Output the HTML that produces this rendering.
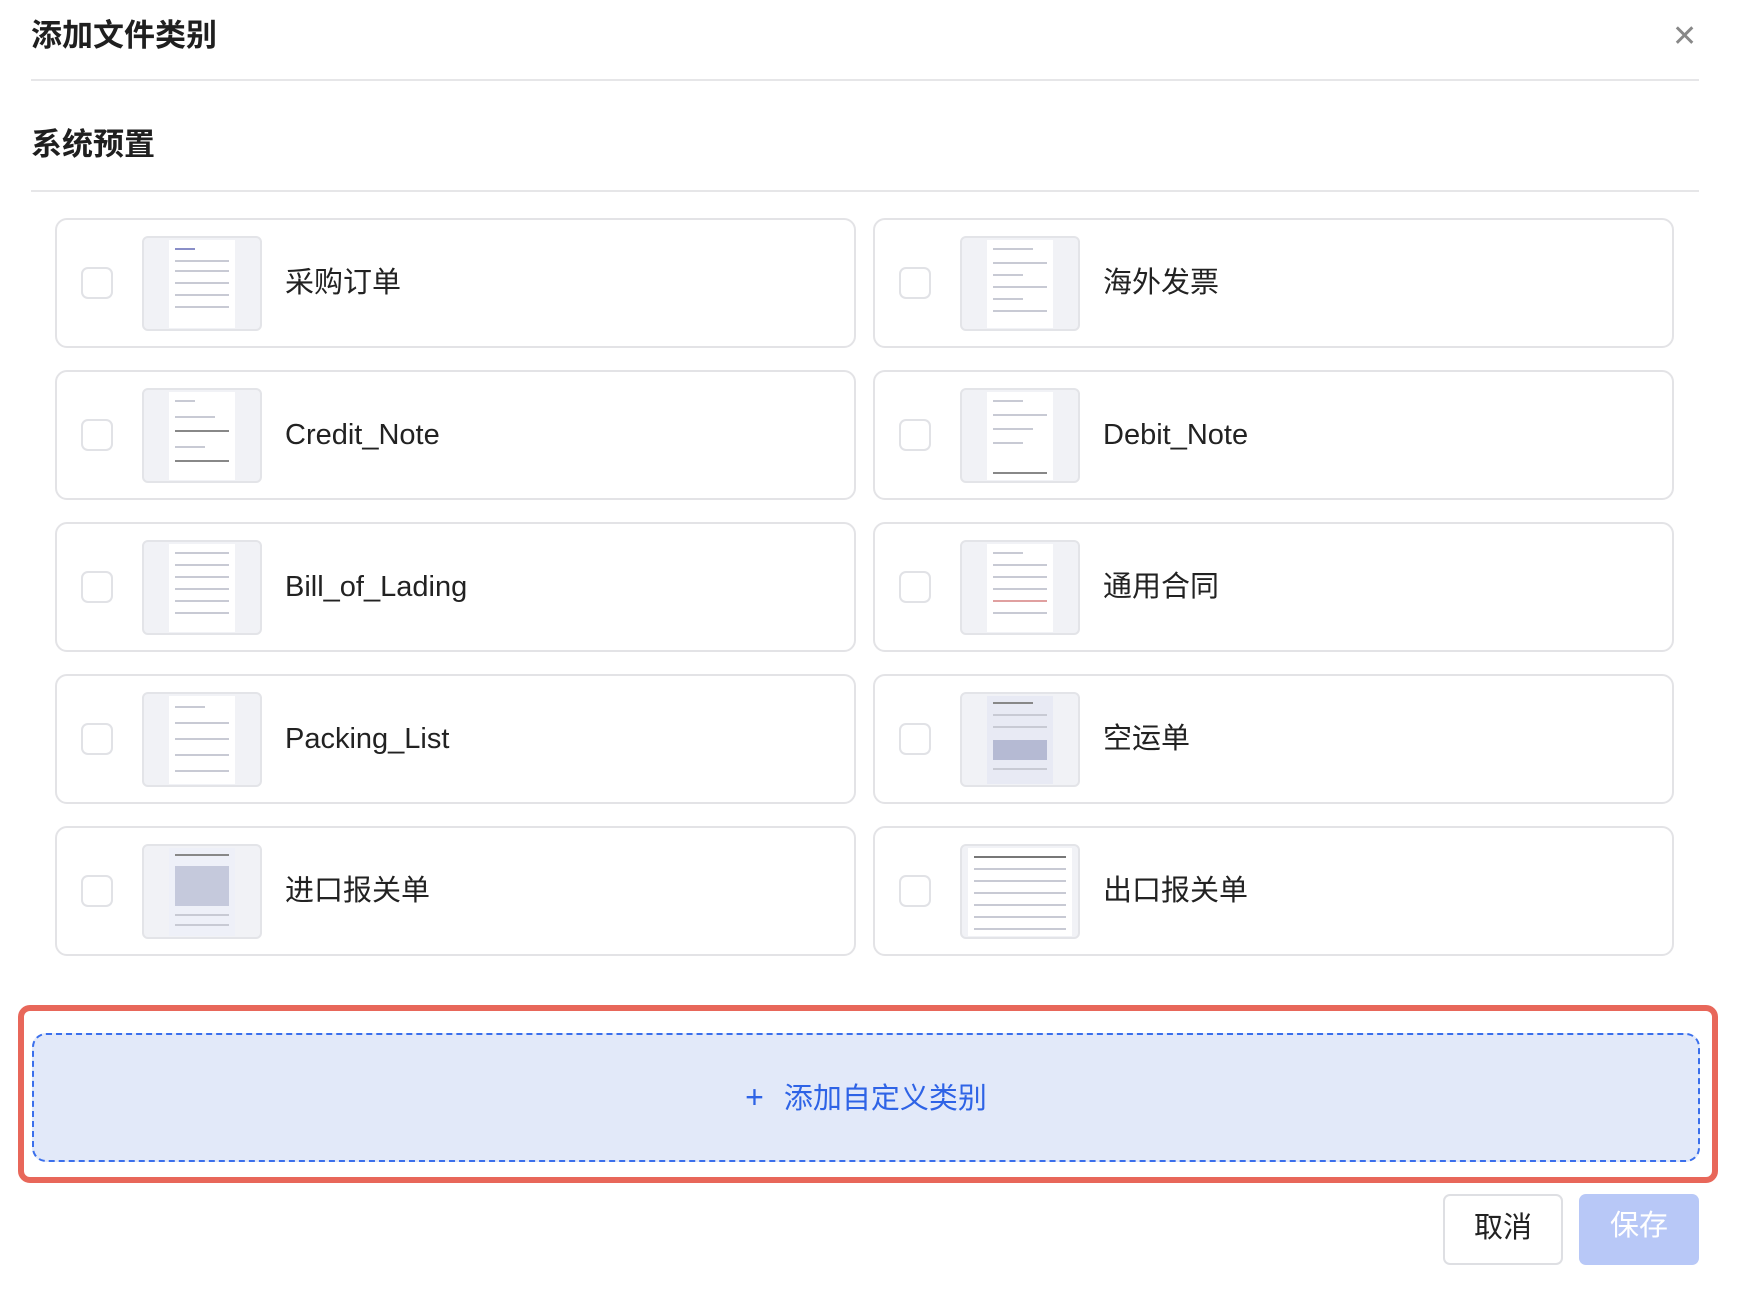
<!DOCTYPE html>
<html><head><meta charset="utf-8"><style>
*{box-sizing:border-box;margin:0;padding:0}
body{width:1740px;height:1292px;background:#fff;position:relative;font-family:"Liberation Sans","Noto Sans CJK SC",sans-serif;color:#1f1f1f;overflow:hidden}
.abs{position:absolute}
.title{left:31px;top:16px;font-size:31px;font-weight:600;line-height:40px}
.close{left:1672px;top:22px;font-size:30px;color:#888;line-height:30px}
.hr{height:2px;background:#e6e6e8;left:31px;width:1668px}
.sec{left:31px;top:125px;font-size:31px;font-weight:700;line-height:40px}
.card{width:801px;height:130px;border:2px solid #e3e3e6;border-radius:12px;background:#fff}
.cb{position:absolute;left:24px;top:47px;width:32px;height:32px;border:2px solid #e1e2e6;border-radius:7px}
.th{position:absolute;left:85px;top:16px;width:120px;height:95px;border:2px solid #e3e4e8;border-radius:6px;background:#f1f2f6;overflow:hidden}
.doc{position:absolute;left:25px;top:2px;width:66px;height:88px;background:#fff}
.doc i{position:absolute;left:6px;height:2px;background:#c8cad4}
.lb{position:absolute;left:228px;top:0;line-height:126px;font-size:29px;color:#222}
.red{left:18px;top:1005px;width:1700px;height:178px;border:6px solid #e8675a;border-radius:12px}
.dash{left:32px;top:1033px;width:1668px;height:129px;border:2px dashed #3a6fec;border-radius:14px;background:#e2e9f9;text-align:center;line-height:125px;font-size:29px;color:#2e63e6}
.btn{top:1194px;width:120px;height:71px;border-radius:7px;text-align:center;line-height:65px;font-size:29px}
</style></head><body>
<div class="abs title">添加文件类别</div>
<div class="abs close">✕</div>
<div class="abs hr" style="top:79px"></div>
<div class="abs sec">系统预置</div>
<div class="abs hr" style="top:190px"></div>

<div class="abs card" style="left:55px;top:218px"><div class="cb"></div><div class="th"><div class="doc"><i style="top:8px;width:20px;background:#8a8fc8"></i><i style="top:20px;width:54px"></i><i style="top:30px;width:54px"></i><i style="top:42px;width:54px"></i><i style="top:54px;width:54px"></i><i style="top:66px;width:54px"></i></div></div><div class="lb">采购订单</div></div>
<div class="abs card" style="left:873px;top:218px"><div class="cb"></div><div class="th"><div class="doc"><i style="top:8px;width:40px"></i><i style="top:22px;width:54px"></i><i style="top:34px;width:30px"></i><i style="top:46px;width:54px"></i><i style="top:58px;width:30px"></i><i style="top:70px;width:54px"></i></div></div><div class="lb">海外发票</div></div>

<div class="abs card" style="left:55px;top:370px"><div class="cb"></div><div class="th"><div class="doc"><i style="top:8px;width:20px"></i><i style="top:24px;width:40px"></i><i style="top:38px;width:54px;background:#888"></i><i style="top:54px;width:30px"></i><i style="top:68px;width:54px;background:#888"></i></div></div><div class="lb">Credit_Note</div></div>
<div class="abs card" style="left:873px;top:370px"><div class="cb"></div><div class="th"><div class="doc"><i style="top:8px;width:30px"></i><i style="top:22px;width:54px"></i><i style="top:36px;width:40px"></i><i style="top:50px;width:30px"></i><i style="top:80px;width:54px;background:#888"></i></div></div><div class="lb">Debit_Note</div></div>

<div class="abs card" style="left:55px;top:522px"><div class="cb"></div><div class="th"><div class="doc"><i style="top:8px;width:54px"></i><i style="top:20px;width:54px"></i><i style="top:32px;width:54px"></i><i style="top:44px;width:54px"></i><i style="top:56px;width:54px"></i><i style="top:68px;width:54px"></i></div></div><div class="lb">Bill_of_Lading</div></div>
<div class="abs card" style="left:873px;top:522px"><div class="cb"></div><div class="th"><div class="doc"><i style="top:8px;width:30px"></i><i style="top:20px;width:54px"></i><i style="top:32px;width:54px"></i><i style="top:44px;width:54px"></i><i style="top:56px;width:54px;background:#e0a0a0"></i><i style="top:68px;width:54px"></i></div></div><div class="lb">通用合同</div></div>

<div class="abs card" style="left:55px;top:674px"><div class="cb"></div><div class="th"><div class="doc"><i style="top:10px;width:30px"></i><i style="top:26px;width:54px"></i><i style="top:42px;width:54px"></i><i style="top:58px;width:54px"></i><i style="top:74px;width:54px"></i></div></div><div class="lb">Packing_List</div></div>
<div class="abs card" style="left:873px;top:674px"><div class="cb"></div><div class="th"><div class="doc" style="background:#e8eaf4"><i style="top:6px;width:40px;background:#888"></i><i style="top:18px;width:54px"></i><i style="top:30px;width:54px"></i><i style="top:44px;width:54px;height:20px;background:#b5bad3"></i><i style="top:72px;width:54px"></i></div></div><div class="lb">空运单</div></div>

<div class="abs card" style="left:55px;top:826px"><div class="cb"></div><div class="th"><div class="doc" style="background:#eef0f8"><i style="top:6px;width:54px;background:#888"></i><i style="top:18px;width:54px;height:40px;background:#c5c9dc"></i><i style="top:66px;width:54px"></i><i style="top:76px;width:54px"></i></div></div><div class="lb">进口报关单</div></div>
<div class="abs card" style="left:873px;top:826px"><div class="cb"></div><div class="th"><div class="doc" style="left:6px;width:104px"><i style="top:8px;width:92px;background:#777"></i><i style="top:20px;width:92px"></i><i style="top:32px;width:92px"></i><i style="top:44px;width:92px"></i><i style="top:56px;width:92px"></i><i style="top:68px;width:92px"></i><i style="top:80px;width:92px"></i></div></div><div class="lb">出口报关单</div></div>

<div class="abs red"></div>
<div class="abs dash"><span style="font-size:32px;margin-right:20px">+</span>添加自定义类别</div>
<div class="abs btn" style="left:1443px;border:2px solid #dedfe3;color:#222">取消</div>
<div class="abs btn" style="left:1579px;background:#b8c8f7;color:#fff">保存</div>
</body></html>
